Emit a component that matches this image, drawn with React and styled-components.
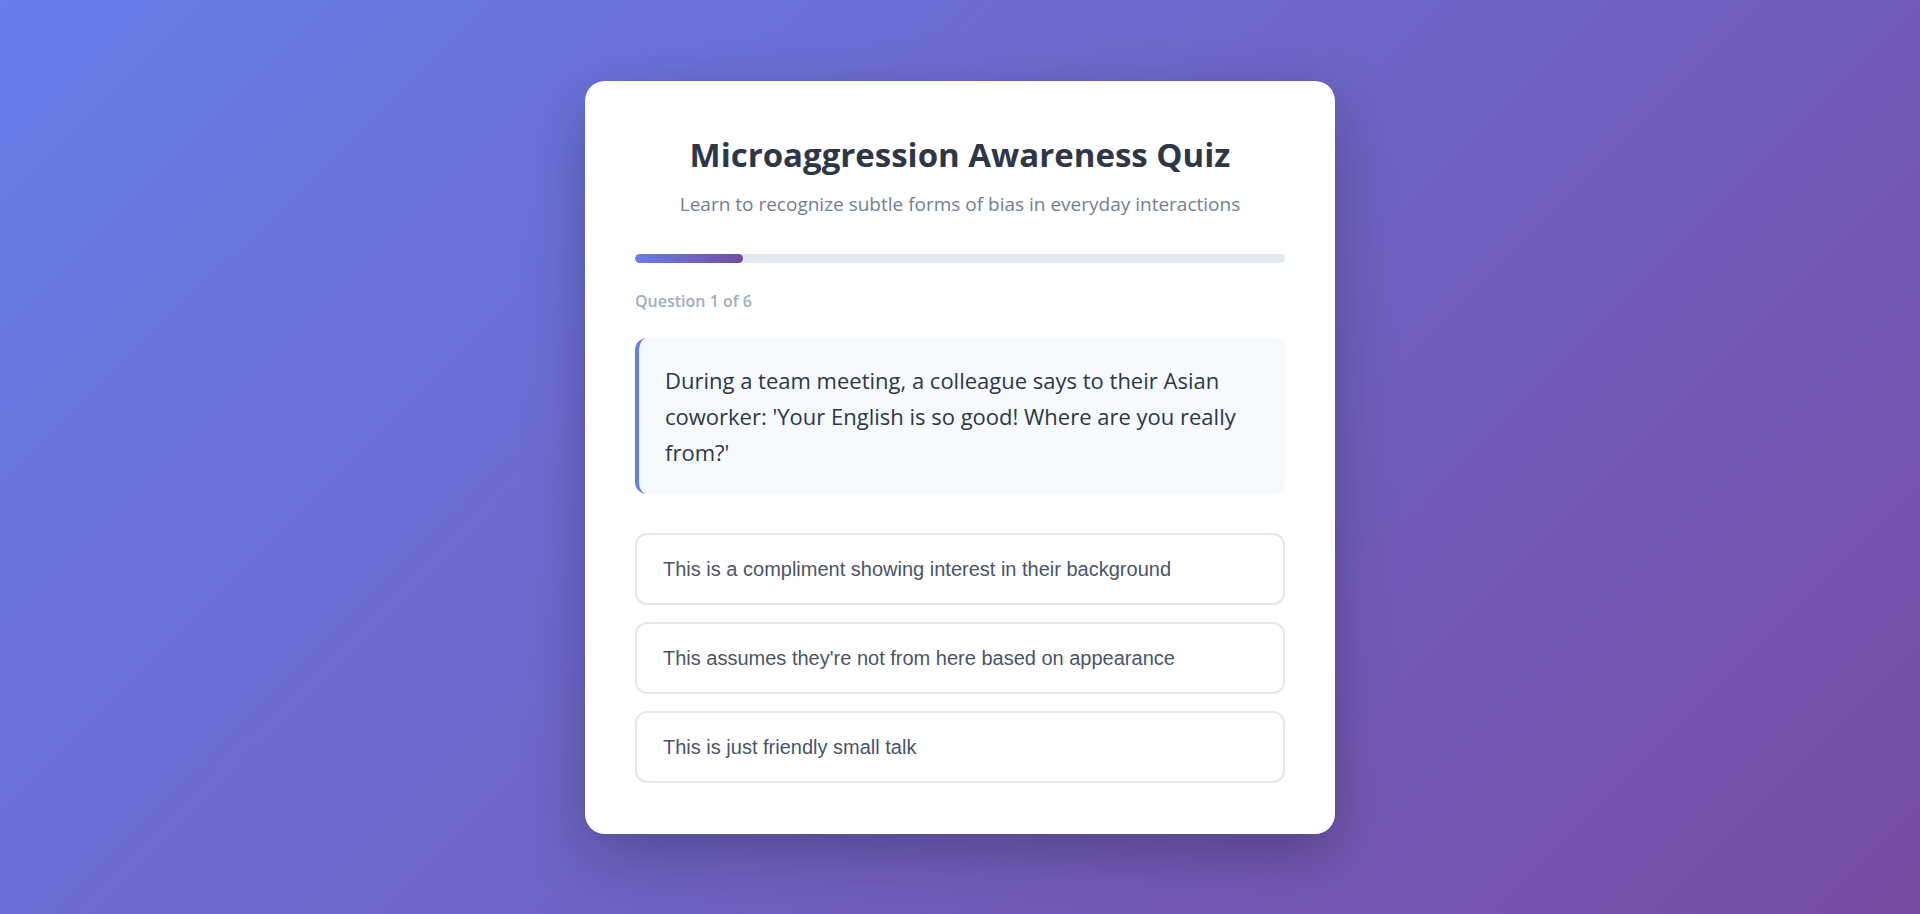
import styled, { createGlobalStyle } from "styled-components";

const GlobalStyle = createGlobalStyle`
  html, body {
    margin: 0;
    padding: 0;
  }
  body {
    font-family: "Open Sans", "Noto Sans", "DejaVu Sans", sans-serif;
  }
  * {
    box-sizing: border-box;
  }
`;

const Page = styled.div`
  width: 100%;
  min-height: 100vh;
  background: linear-gradient(135deg, #667eea 0%, #764ba2 100%);
  display: flex;
  align-items: center;
  justify-content: center;
`;
const Card = styled.div`
  width: 750px;
  background-color: #ffffff;
  border-radius: 20px;
  padding: 50px 50px 51px;
  box-shadow: 0 20px 60px rgba(0, 0, 0, 0.25);
  display: flex;
  flex-direction: column;
`;
const Title = styled.h1`
  margin: 2px 0 0;
  text-align: center;
  font-size: 33px;
  line-height: 44px;
  font-weight: 700;
  color: #2d3748;
`;
const Subtitle = styled.p`
  margin: 14px 0 0;
  text-align: center;
  font-size: 19px;
  line-height: 26px;
  color: #718096;
`;
const Progress = styled.div`
  margin-top: 37px;
  height: 9px;
  border-radius: 5px;
  background-color: #e2e8f0;
  overflow: hidden;
`;
const ProgressFill = styled.div`
  height: 100%;
  border-radius: 5px;
  background: linear-gradient(90deg, #667eea, #764ba2);
`;
const Counter = styled.div`
  margin-top: 27px;
  font-size: 16px;
  line-height: 22px;
  font-weight: 600;
  color: #a0aec0;
`;
const QuestionBox = styled.div`
  margin-top: 26px;
  background-color: #f7fafc;
  border-left: 4px solid #667eea;
  border-radius: 12px;
  padding: 24px 26px;
  font-size: 22px;
  line-height: 36px;
  color: #2d3748;
`;
const Options = styled.div`
  margin-top: 39px;
  display: flex;
  flex-direction: column;
  gap: 17px;
`;
const Option = styled.button`
  display: block;
  width: 100%;
  text-align: left;
  background-color: #ffffff;
  border: 2px solid #e2e8f0;
  border-radius: 12px;
  padding: 22px 26px;
  font-family: "Liberation Sans", Arial, sans-serif;
  font-size: 20px;
  line-height: 24px;
  color: #4a5568;
  cursor: pointer;
  transition: border-color 0.2s, background-color 0.2s;

  &:hover {
    border-color: #667eea;
    background-color: #f7f8ff;
  }
`;

const question = {
  text: "During a team meeting, a colleague says to their Asian coworker: 'Your English is so good! Where are you really from?'",
  options: [
    "This is a compliment showing interest in their background",
    "This assumes they're not from here based on appearance",
    "This is just friendly small talk",
  ],
};

const total = 6;
const current = 1;

const App = () => {
  return (
    <Page>
      <GlobalStyle />
      <Card>
        <Title>Microaggression Awareness Quiz</Title>
        <Subtitle>Learn to recognize subtle forms of bias in everyday interactions</Subtitle>
        <Progress>
          <ProgressFill style={{ width: `${(current / total) * 100}%` }} />
        </Progress>
        <Counter>
          Question {current} of {total}
        </Counter>
        <QuestionBox>{question.text}</QuestionBox>
        <Options>
          {question.options.map((opt) => (
            <Option key={opt}>{opt}</Option>
          ))}
        </Options>
      </Card>
    </Page>
  );
};
export default App;
